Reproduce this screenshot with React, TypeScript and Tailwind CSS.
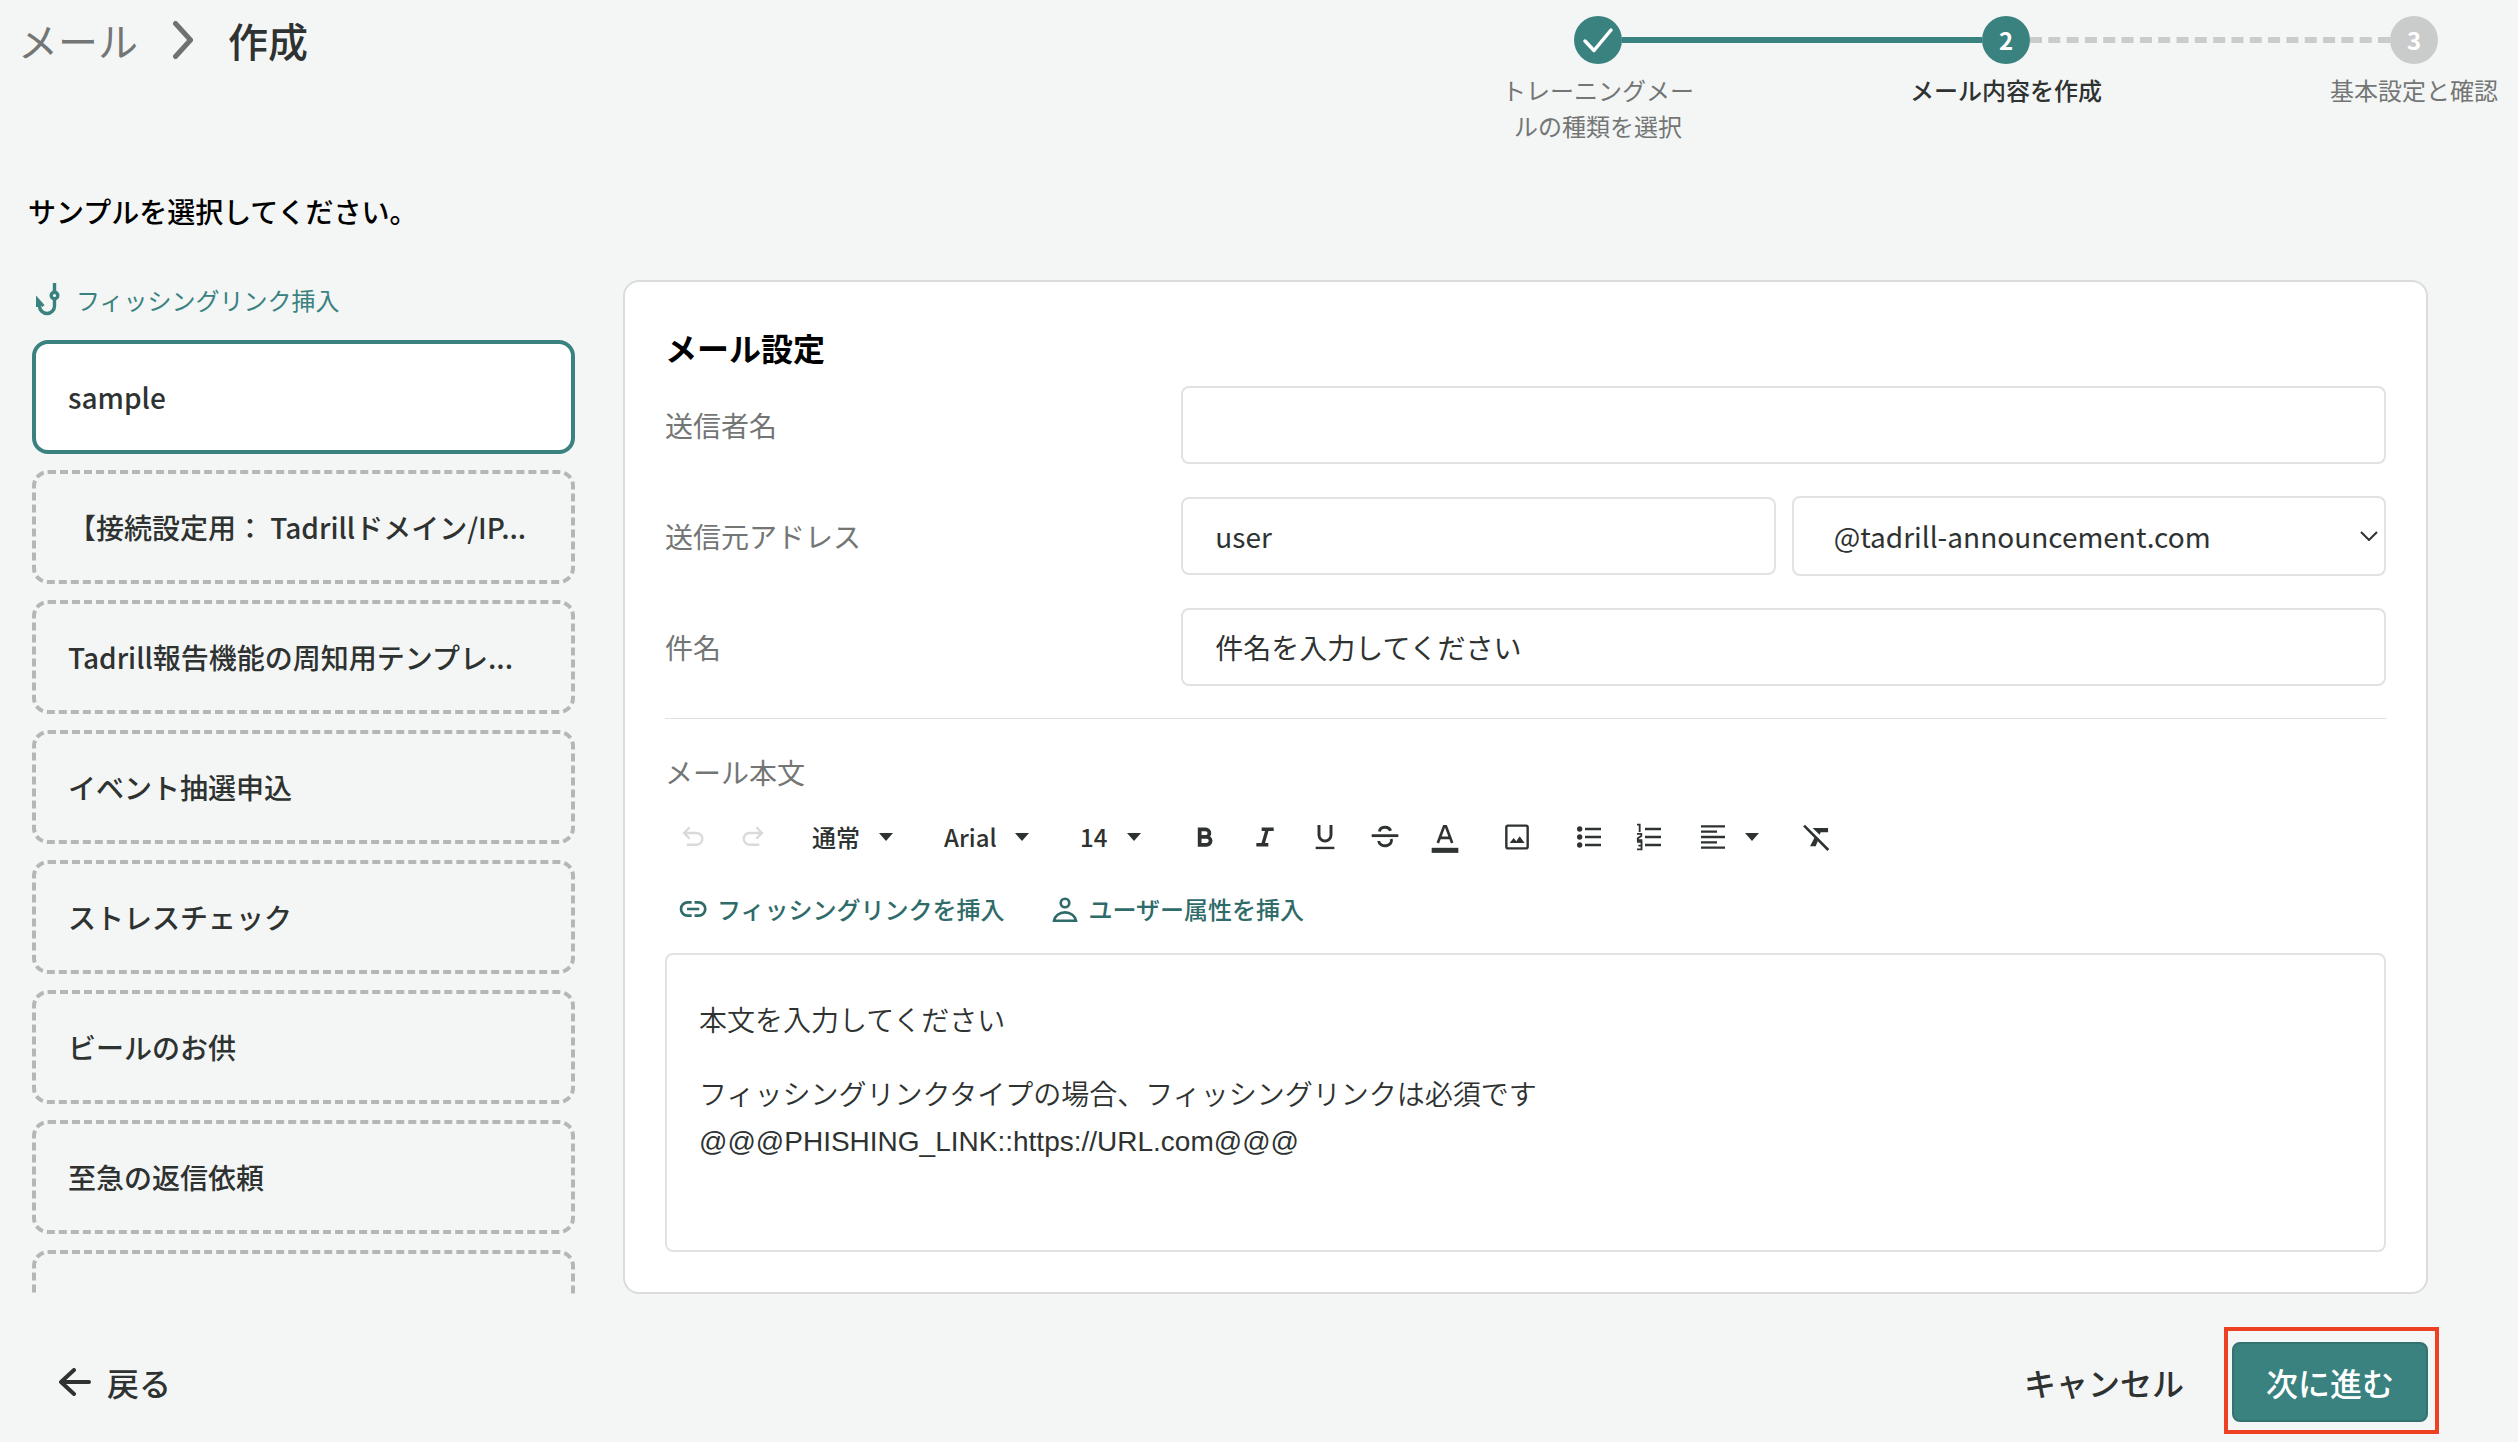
import { useState } from 'react';
import type { ReactNode } from 'react';
import clsx from 'clsx';

const samples = [
  'sample',
  '【接続設定用： Tadrillドメイン/IP...',
  'Tadrill報告機能の周知用テンプレ...',
  'イベント抽選申込',
  'ストレスチェック',
  'ビールのお供',
  '至急の返信依頼',
  '',
];

function Caret() {
  return (
    <svg viewBox="0 0 14 8" className="w-3.5 h-2" fill="currentColor" aria-hidden="true">
      <path d="M0 0h14L7 8z" />
    </svg>
  );
}

// Shared frame for the editor icons
function Icon({ children }: { children: ReactNode }) {
  return (
    <svg
      viewBox="0 0 24 24"
      className="w-8 h-8 shrink-0"
      fill="none"
      stroke="currentColor"
      strokeWidth="1.8"
      aria-hidden="true"
    >
      {children}
    </svg>
  );
}

function ToolButton({ label, disabled, children }: { label: string; disabled?: boolean; children: ReactNode }) {
  return (
    <button
      type="button"
      aria-label={label}
      disabled={disabled}
      className="flex w-14 h-14 items-center justify-center rounded disabled:text-[#d9dadb]"
    >
      <Icon>{children}</Icon>
    </button>
  );
}

function ToolSelect({ label, value, className }: { label: string; value: string; className: string }) {
  return (
    <div className={clsx('relative flex h-14 items-center', className)}>
      <select aria-label={label} className="w-full h-full appearance-none bg-transparent pl-[15px] text-2xl font-medium">
        <option>{value}</option>
      </select>
      <span className="absolute right-5 pointer-events-none">
        <Caret />
      </span>
    </div>
  );
}

function Stepper() {
  return (
    <div className="w-[1024px] pt-4">
      <div className="flex items-center px-20 text-2xl font-bold text-white">
        <span className="flex w-12 h-12 items-center justify-center rounded-full bg-[#3a8280]">
          <svg viewBox="0 0 48 48" className="w-12 h-12" fill="none" stroke="currentColor" strokeWidth="3.5" strokeLinecap="round" strokeLinejoin="round" aria-hidden="true">
            <path d="M11 25l9 9.500L37 14" />
          </svg>
        </span>
        <div className="flex-1 border-t-6 border-[#3a8280]" />
        <span className="flex w-12 h-12 items-center justify-center rounded-full bg-[#3a8280]">2</span>
        <div className="flex-1 border-t-6 border-dashed border-[#cacccb]" />
        <span className="flex w-12 h-12 items-center justify-center rounded-full bg-[#cacccb]">3</span>
      </div>
      <ol className="mt-2 flex justify-between text-center text-2xl leading-9 text-[#737675]">
        <li className="w-52 px-1">トレーニングメールの種類を選択</li>
        <li className="w-52 px-1 font-medium text-[#2e3231]" aria-current="step">メール内容を作成</li>
        <li className="w-52 px-1">基本設定と確認</li>
      </ol>
    </div>
  );
}

function SampleList() {
  const [selected, setSelected] = useState(0);

  return (
    <aside className="flex w-[543px] shrink-0 flex-col">
      <div className="flex h-10 items-center gap-3 text-2xl text-[#3a8280]">
        <svg viewBox="0 0 32 36" className="w-8 h-9" fill="none" stroke="currentColor" strokeWidth="3.4" aria-hidden="true">
          <path d="M22.500 1v8.500M22.500 17v7a7.500 7.500 0 0 1-15 0" />
          <circle cx="22.500" cy="13.500" r="3.300" />
          <path d="M4 25V13.500l8.500 9.500-2 2-1.500-1.500V25z" fill="currentColor" stroke="none" />
        </svg>
        フィッシングリンク挿入
      </div>
      <ul className="mt-5 flex h-0 grow flex-col gap-4 overflow-hidden">
        {samples.map((name, i) => (
          <li key={name}>
            <button
              type="button"
              onClick={() => setSelected(i)}
              className={clsx(
                'block w-full h-[114px] truncate rounded-2xl border-4 px-8 text-left text-[28px] font-medium',
                i === selected ? 'border-[#3a8280] bg-white' : 'border-dashed border-[#b5b7b6]'
              )}
            >
              {name}
            </button>
          </li>
        ))}
      </ul>
    </aside>
  );
}

function Toolbar() {
  return (
    <>
      <div className="mt-4 flex gap-4">
        <div className="flex gap-1">
          <ToolButton label="元に戻す" disabled>
            <path d="M9.500 4.700L5.300 9l4.200 4.300M5.300 9h9.300a4.400 4.400 0 0 1 0 8.800H7.300" />
          </ToolButton>
          <ToolButton label="やり直す" disabled>
            <path d="M14.500 4.700L18.700 9l-4.200 4.300M18.700 9H9.400a4.400 4.400 0 0 0 0 8.800h7.300" />
          </ToolButton>
        </div>
        <ToolSelect label="段落スタイル" value="通常" className="w-[116px]" />
        <ToolSelect label="フォント" value="Arial" className="w-[120px]" />
        <ToolSelect label="文字サイズ" value="14" className="w-24" />
        <div className="flex gap-1">
          <ToolButton label="太字">
            <path d="M8 6.300h4.500a2.800 2.800 0 0 1 0 5.600H8zM8 11.900h5.200a3 3 0 0 1 0 6H8z" strokeWidth="2.800" />
          </ToolButton>
          <ToolButton label="斜体">
            <path d="M9.500 6.200H18.500M5.500 17.800h9M13.700 6.200L10.300 17.800" strokeWidth="2.500" />
          </ToolButton>
          <ToolButton label="下線">
            <path d="M7.500 3v7.500a4.500 4.500 0 0 0 9 0V3" strokeWidth="2.200" />
            <path d="M5 20.200h14" />
          </ToolButton>
          <ToolButton label="取り消し線">
            <path d="M2 11h20" strokeWidth="2.100" />
            <path d="M7.800 7.800a4.300 3.600 0 0 1 8.400-.5M7.300 15a4.800 3.800 0 1 0 9.300-1.500" strokeWidth="2.200" />
          </ToolButton>
          <ToolButton label="文字色">
            <path d="M6.600 16.500L11.300 4h1.400l4.700 12.500M8.300 12.700h7.400" strokeWidth="2" />
            <path d="M2 22h20" strokeWidth="3.800" />
          </ToolButton>
        </div>
        <ToolButton label="画像">
          <rect x="4" y="3.500" width="16" height="17" rx="1.200" />
          <path d="M6.500 16.500l3-3.700 2 2.400 2.500-3.700 3.700 5z" fill="currentColor" stroke="none" />
        </ToolButton>
        <div className="flex gap-1">
          <ToolButton label="箇条書き">
            <path d="M9 6h12M9 12h12M9 18h12" />
            <path d="M3 6a2 2 0 1 0 4 0a2 2 0 1 0-4 0M3 12a2 2 0 1 0 4 0a2 2 0 1 0-4 0M3 18a2 2 0 1 0 4 0a2 2 0 1 0-4 0" fill="currentColor" stroke="none" />
          </ToolButton>
          <ToolButton label="番号付きリスト">
            <path d="M9 6h12M9 12h12M9 18h12" />
            <path d="M3 2.700h2v5.600M3 9.700h3.200v1.600L3.600 13v1.300H7M3 15.700h3.400v5.600H3M4 18.500h2.400" strokeWidth="1.400" />
          </ToolButton>
          <button type="button" aria-label="配置" className="flex h-14 items-center gap-4 pl-4 pr-3.5">
            <Icon>
              <path d="M3 4h18M3 8h12M3 12h18M3 16h12M3 20h18" />
            </Icon>
            <Caret />
          </button>
        </div>
        <ToolButton label="書式をクリア">
          <path d="M2.300 3.500L20.500 21.700" strokeWidth="2" />
          <path d="M8.700 5.200h11.600v3.200h-5.500l-.8 1.900-2.200-2.100zM10.200 12.300l2.500 2.500L11 19H6.800z" fill="currentColor" stroke="none" />
        </ToolButton>
      </div>
      <div className="mt-4 flex gap-5 text-2xl font-medium text-[#2f6b69]">
        <button type="button" className="flex h-14 items-center gap-2 px-3">
          <Icon>
            <path d="M11 7H8a5 5 0 0 0 0 10h3M13.200 7h3a5 5 0 0 1 0 10h-3M7.500 12h9.200" strokeWidth="2" />
          </Icon>
          フィッシングリンクを挿入
        </button>
        <button type="button" className="flex h-14 items-center gap-2 px-3">
          <Icon>
            <circle cx="12" cy="7.500" r="3.200" strokeWidth="2" />
            <path d="M3.800 20.800c.5-3.500 4-6.300 8.200-6.300s7.700 2.800 8.200 6.300z" strokeWidth="2" />
          </Icon>
          ユーザー属性を挿入
        </button>
      </div>
    </>
  );
}

function MailForm() {
  const field = 'min-w-0 rounded-lg border-2 border-[#e1e2e2] bg-white px-8 text-[28px]';

  return (
    <section className="flex min-w-0 flex-1 flex-col rounded-2xl border-2 border-[#dadddc] bg-white p-10">
      <h2 className="mb-3.5 text-[32px] leading-[50px] font-bold text-black">メール設定</h2>

      <div className="flex flex-col gap-8 text-[28px]">
        <div className="flex items-center">
          <label htmlFor="sender" className="w-[30%] text-[#737675]">送信者名</label>
          <input id="sender" type="text" className={clsx(field, 'h-[78px] flex-1')} />
        </div>
        <div className="flex items-center">
          <label htmlFor="address" className="w-[30%] text-[#737675]">送信元アドレス</label>
          <div className="grid flex-1 grid-cols-2 items-center gap-4">
            <input id="address" type="text" defaultValue="user" className={clsx(field, 'h-[78px]')} />
            <div className="relative flex items-center">
              <select aria-label="ドメイン" className={clsx(field, 'h-20 w-full appearance-none pl-10')}>
                <option>@tadrill-announcement.com</option>
              </select>
              <svg viewBox="0 0 18 10" className="absolute right-2 w-[18px] h-2.5 pointer-events-none" fill="none" stroke="currentColor" strokeWidth="2" aria-hidden="true">
                <path d="M1 1l8 8 8-8" />
              </svg>
            </div>
          </div>
        </div>
        <div className="flex items-center">
          <label htmlFor="subject" className="w-[30%] text-[#737675]">件名</label>
          <input id="subject" type="text" defaultValue="件名を入力してください" className={clsx(field, 'h-[78px] flex-1')} />
        </div>
      </div>

      <hr className="my-8 border-[#dfe1e0]" />

      <p id="body-label" className="text-[28px] leading-[42px] text-[#737675]">メール本文</p>
      <Toolbar />

      {/* Rich text body */}
      <div
        role="textbox"
        aria-multiline="true"
        aria-labelledby="body-label"
        contentEditable
        suppressContentEditableWarning
        className="mt-4 min-h-[299px] rounded-lg border-2 border-[#e1e2e2] px-8 py-11 font-['Liberation_Sans','Noto_Sans_CJK_JP',sans-serif] text-[28px] leading-[46px] font-[350]"
      >
        <p className="mb-7">本文を入力してください</p>
        <p>
          フィッシングリンクタイプの場合、フィッシングリンクは必須です
          <br />
          @@@PHISHING_LINK::https://URL.com@@@
        </p>
      </div>
    </section>
  );
}

export default function App() {
  return (
    <div lang="ja" className="min-h-screen bg-[#f4f6f5] font-['Noto_Sans_CJK_JP',sans-serif] text-[#2e3231]">
      <header className="flex items-start justify-between pl-[18px]">
        <nav className="flex items-center gap-[35px] pt-2.5 text-[40px] leading-[60px]">
          <a href="#mail" className="text-[#737675]">メール</a>
          <svg viewBox="0 0 20 38" className="w-5 h-[38px]" fill="none" stroke="#6e7170" strokeWidth="5" strokeLinecap="round" strokeLinejoin="round" aria-hidden="true">
            <path d="M2.500 2.500L17.500 19 2.500 35.500" />
          </svg>
          <h1 className="font-medium">作成</h1>
        </nav>
        <Stepper />
      </header>

      <p className="mt-[46px] px-7 text-[28px] leading-[42px] font-medium text-black">サンプルを選択してください。</p>

      <main className="mt-12 flex gap-12 pl-8 pr-[90px]">
        <SampleList />
        <MailForm />
      </main>

      <footer className="mt-12 flex items-center justify-between pb-5 pl-[59px] pr-[90px] text-[32px] font-medium">
        <button type="button" className="flex h-20 items-center gap-4">
          <svg viewBox="0 0 32 28" className="w-8 h-7" fill="none" stroke="currentColor" strokeWidth="4" strokeLinecap="round" strokeLinejoin="round" aria-hidden="true">
            <path d="M30 14H2M15 2L2 14l13 12" />
          </svg>
          戻る
        </button>
        <div className="flex items-center gap-12">
          <button type="button" className="h-20">キャンセル</button>
          <div className="relative">
            <button type="button" className="h-20 rounded-lg border-2 border-[#34726f] bg-[#3a8280] px-8 text-white">
              次に進む
            </button>
            <div className="absolute -top-[15px] -right-[11px] -bottom-3 -left-2 border-4 border-[#ee4023] pointer-events-none" />
          </div>
        </div>
      </footer>
    </div>
  );
}
